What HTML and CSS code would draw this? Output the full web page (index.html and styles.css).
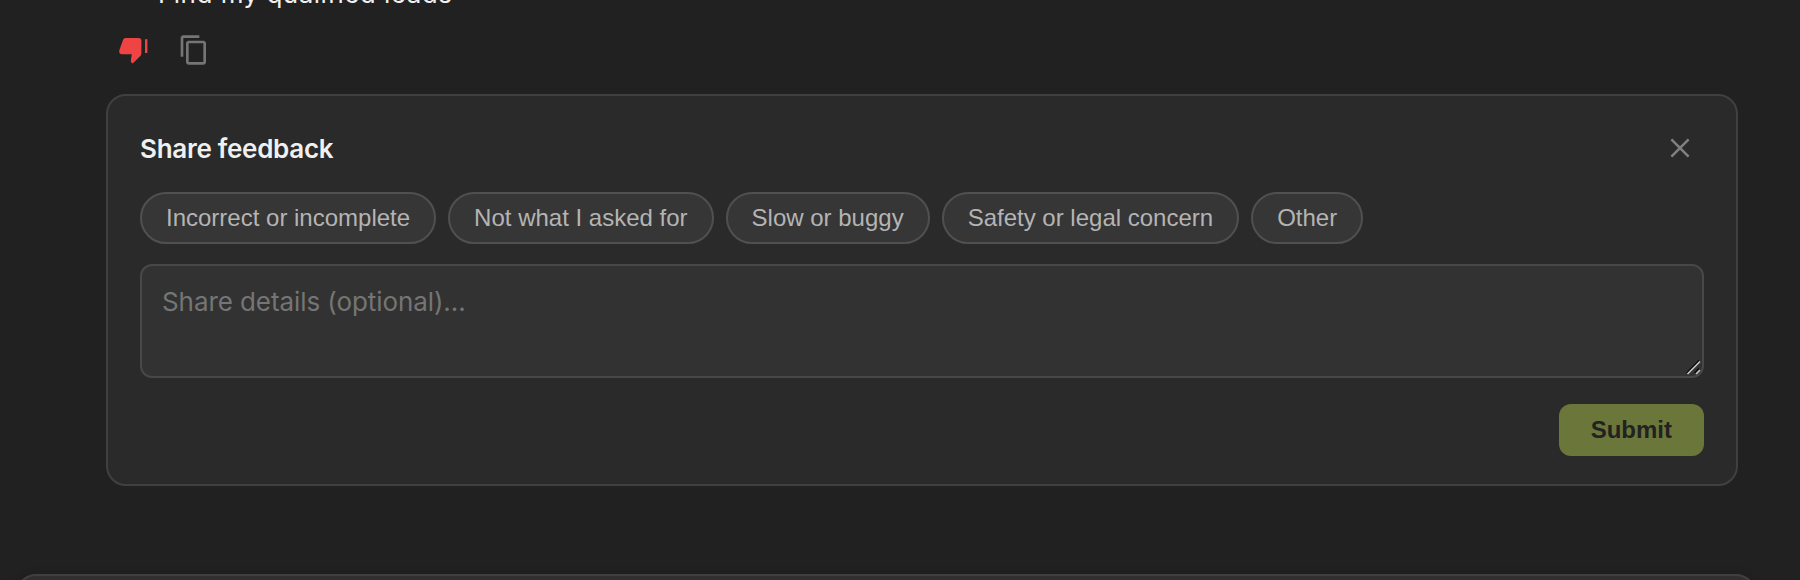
FILE: index.html
```html
<!DOCTYPE html>
<html lang="en">
<head>
  <meta charset="UTF-8">
  <title>Share feedback</title>
  <meta name="viewport" content="width=device-width, initial-scale=1.0">
  <link rel="stylesheet" href="styles.css">
</head>
<body>

  <main class="chat">
    <p class="message">Find my qualified leads</p>

    <div class="actions">
      <button class="icon-btn disliked" aria-label="Bad response">
        <svg width="32" height="32" viewBox="0 0 32 32">
          <path d="M7.4 4H20.6Q23.4 4 23.4 6.8V19.2Q23.4 21 22.1 22.3L14.7 29.4L13.4 28.5Q12.6 27.8 12.8 26.6L13.8 20.3H4Q1.2 20.3 1.2 17.5Q1.2 16.4 1.6 15.6L5 6Q5.7 4 7.4 4Z"/>
          <path d="M27 5.2h2.4v13.8h-2.4z"/>
        </svg>
      </button>
      <button class="icon-btn" aria-label="Copy">
        <svg width="32" height="32" viewBox="0 0 24 24">
          <path d="M16 1H4c-1.1 0-2 .9-2 2v14h2V3h12V1zm3 4H8c-1.1 0-2 .9-2 2v14c0 1.1.9 2 2 2h11c1.1 0 2-.9 2-2V7c0-1.1-.9-2-2-2zm0 16H8V7h11v14z"/>
        </svg>
      </button>
    </div>

    <section class="feedback">
      <header class="feedback-header">
        <h2>Share feedback</h2>
        <button class="close" aria-label="Close">
          <svg width="20" height="20" viewBox="0 0 20 20">
            <path d="M1.4 1.4l17.2 17.2M18.6 1.4L1.4 18.6"/>
          </svg>
        </button>
      </header>

      <div class="chips">
        <button class="chip">Incorrect or incomplete</button>
        <button class="chip">Not what I asked for</button>
        <button class="chip">Slow or buggy</button>
        <button class="chip">Safety or legal concern</button>
        <button class="chip">Other</button>
      </div>

      <div class="details-wrap">
        <textarea class="details" placeholder="Share details (optional)..."></textarea>
        <svg class="grip" width="15" height="15" viewBox="0 0 15 15">
          <path class="grip-shade" d="M.7 13L13 .7M8.7 13L13 8.7"/>
          <path class="grip-line" d="M1.5 14L14 1.5M10 14L14 10"/>
        </svg>
      </div>

      <div class="feedback-footer">
        <button class="submit">Submit</button>
      </div>
    </section>
  </main>

  <div class="composer"></div>

</body>
</html>
```

FILE: styles.css
```css
html {
  height: 100%;
  overflow: hidden;
  background: #212121;
}
body {
  display: flex;
  flex-direction: column;
  margin: 0;
  height: 580px;
  overflow: hidden;
  color: #f0f0f0;
  font-family: Inter, sans-serif;
  color-scheme: dark;
}
button {
  margin: 0;
  padding: 0;
  border: 0;
  background: none;
  font-family: "Liberation Sans", Arial, sans-serif;
  font-size: 24px;
}
svg {
  display: block;
}
.chat {
  padding: 0 62px 0 106px;
}
.message {
  margin: -26px 0 0 52px;
  font-size: 26px;
  line-height: 40px;
  letter-spacing: 0.48px;
}
.actions {
  display: flex;
  gap: 28px;
  margin: 20px 0 28px 12px;
}
.icon-btn {
  fill: #757575;
}
.icon-btn.disliked {
  fill: #ef4444;
}
.feedback {
  box-sizing: border-box;
  height: 392px;
  padding: 28px 32px;
  background: #2a2a2a;
  border: 2px solid #404040;
  border-radius: 20px;
}
.feedback-header {
  display: flex;
  justify-content: space-between;
  align-items: center;
  height: 48px;
}
.feedback-header h2 {
  margin: 0;
  padding-top: 2px;
  font-size: 26px;
  font-weight: 600;
  line-height: 40px;
  letter-spacing: -0.28px;
}
.close {
  padding: 14px;
}
.close svg {
  fill: none;
  stroke: #808080;
  stroke-width: 2.5;
}
.chips {
  display: flex;
  gap: 12px;
  margin: 20px 0;
}
.chip {
  height: 52px;
  padding: 0 24px 1px;
  border: 2px solid #505050;
  border-radius: 26px;
  background: #363636;
  color: #b4b4b4;
}
.details-wrap {
  position: relative;
}
.details {
  display: block;
  box-sizing: border-box;
  width: 100%;
  height: 114px;
  padding: 16px 20px;
  border: 2px solid #484848;
  border-radius: 12px;
  background: #323232;
  color: #f0f0f0;
  font-family: Inter, sans-serif;
  font-size: 26px;
  line-height: 39px;
  letter-spacing: -0.08px;
  resize: none;
}
.details::placeholder {
  color: #757575;
}
.grip {
  position: absolute;
  right: 3px;
  bottom: 3px;
  fill: none;
  stroke-width: 1.7;
  pointer-events: none;
}
.grip-shade {
  stroke: #0c0c0c;
}
.grip-line {
  stroke: #c4c4c4;
}
.feedback-footer {
  display: flex;
  justify-content: flex-end;
  margin-top: 26px;
}
.submit {
  height: 52px;
  padding: 0 32px 1px;
  border-radius: 12px;
  background: #6b763a;
  color: #222;
  font-weight: bold;
}
.composer {
  flex: none;
  height: 80px;
  margin: 88px 44px 0 16px;
  border: 2px solid #404040;
  border-radius: 20px;
  background: #303030;
  box-shadow: 0 0 8px rgba(0, 0, 0, 0.15);
}
```
